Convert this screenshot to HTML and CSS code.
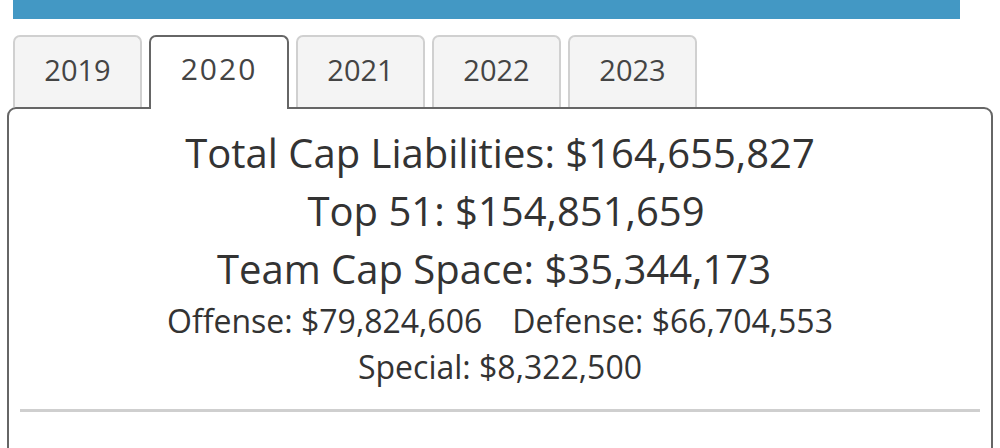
FILE: index.html
```html
<!DOCTYPE html>
<html>

<head>
	<meta charset="UTF-8">
	<title>Cap Space</title>
	<link rel="stylesheet" href="styles.css">
</head>

<body>
	<div class="top-bar"></div>
	<div class="year-tabs">
		<span class="year-tab">2019</span>
		<span class="year-tab active">2020</span>
		<span class="year-tab">2021</span>
		<span class="year-tab">2022</span>
		<span class="year-tab">2023</span>
	</div>
	<div class="cap-panel">
		<div class="cap-big">Total Cap Liabilities: $164,655,827</div>
		<div class="cap-big push-right">Top 51: $154,851,659</div>
		<div class="cap-big push-left">Team Cap Space: $35,344,173</div>
		<div class="cap-small">
			<span>Offense: $79,824,606</span><span class="cap-sep">Defense: $66,704,553</span>
		</div>
		<div class="cap-small">Special: $8,322,500</div>
		<hr class="cap-rule">
	</div>
</body>

</html>
```

FILE: styles.css
```css
html,
body {
	margin: 0;
	padding: 0;
	background: #fff;
	font-family: "Open Sans", "Noto Sans", sans-serif;
	color: #333;
	overflow: hidden;
}

.top-bar {
	margin-left: 13px;
	width: 947px;
	height: 19px;
	background-color: #4398c4;
}

.year-tabs {
	display: flex;
	align-items: flex-end;
	gap: 7px;
	margin: 16px 0 0 13px;
	position: relative;
	z-index: 1;
}

.year-tab {
	box-sizing: border-box;
	width: 129px;
	height: 72px;
	border: 2px solid #d0d0d0;
	border-bottom: none;
	border-radius: 7px 7px 0 0;
	background: #f4f4f4;
	color: #444;
	font-size: 29px;
	line-height: 66px;
	text-align: center;
}

.year-tab.active {
	width: 140px;
	height: 74px;
	margin-bottom: -2px;
	border-color: #666;
	background: #fff;
	letter-spacing: 2px;
	font-size: 30px;
	line-height: 64px;
}

.cap-panel {
	box-sizing: border-box;
	margin: 0 7px;
	height: 360px;
	border: 2px solid #666;
	border-radius: 9px;
	padding: 15px 11px 0;
	text-align: center;
}

.cap-big {
	font-size: 40px;
	line-height: 58px;
}

.push-right {
	padding-left: 12px;
}

.push-left {
	padding-right: 12px;
}

.cap-small {
	font-size: 32px;
	line-height: 46px;
}

.cap-sep {
	margin-left: 30px;
}

.cap-rule {
	margin: 19px 0 0;
	border: none;
	height: 3px;
	background: #cfcfcf;
}
```
